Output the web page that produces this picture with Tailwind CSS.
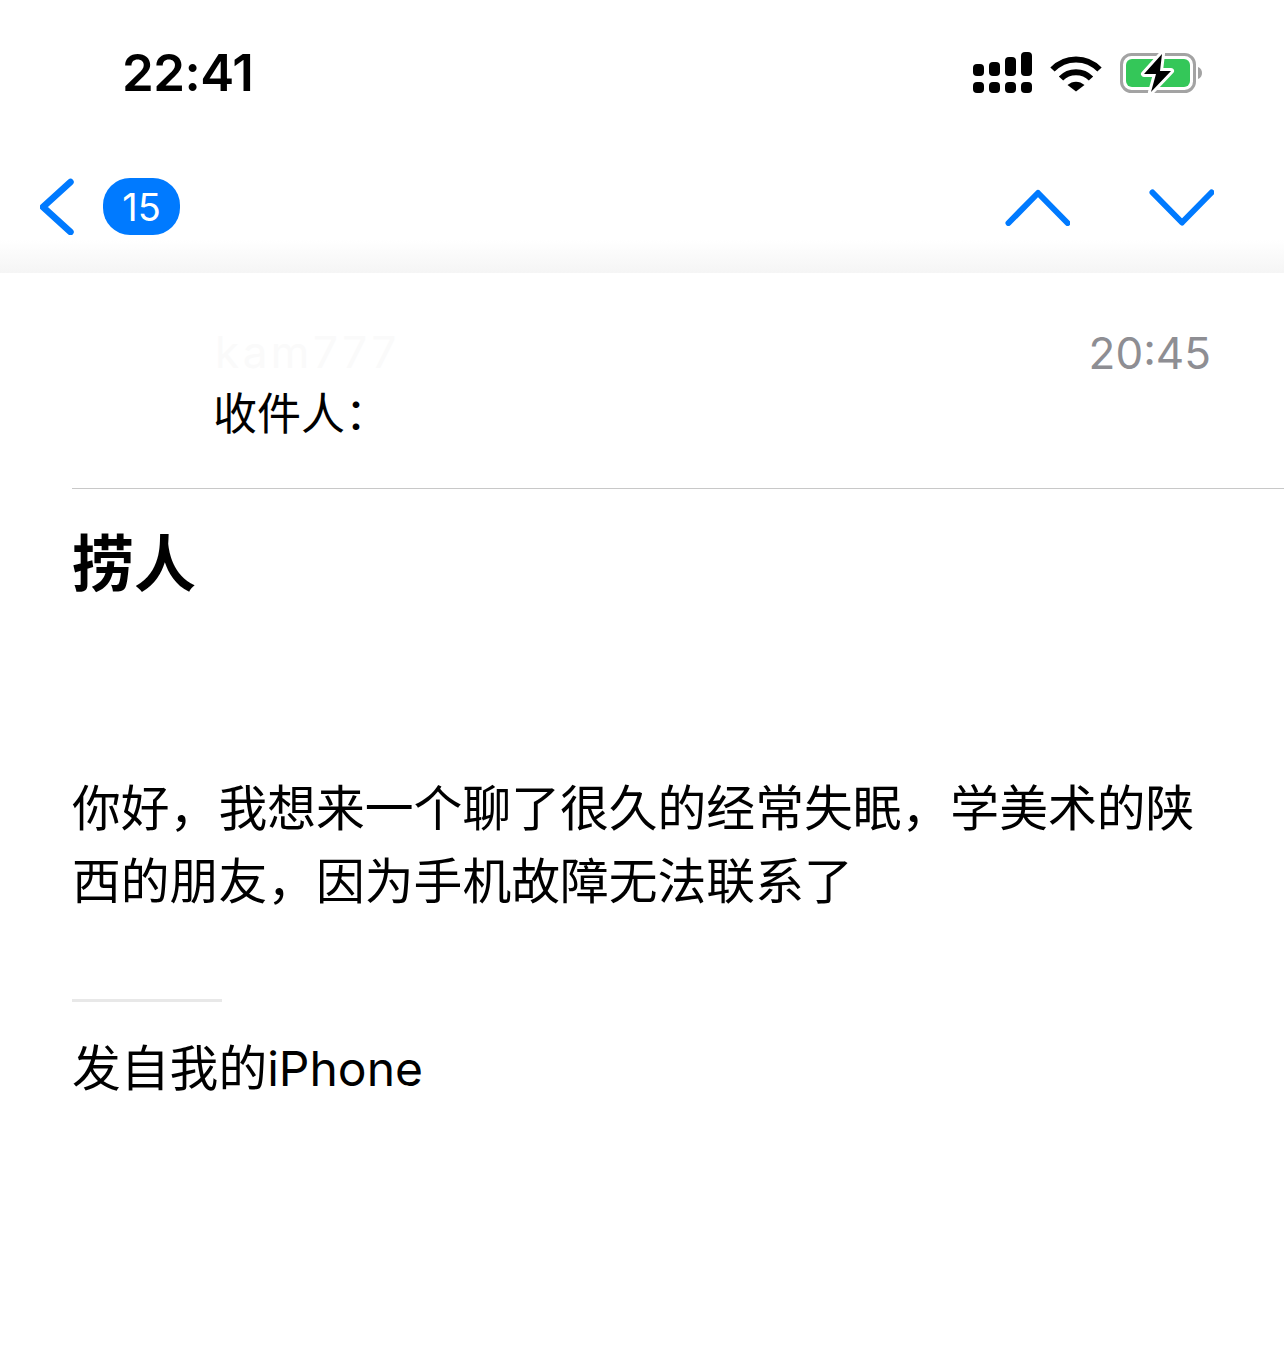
<!DOCTYPE html>
<html lang="zh-CN">
<head>
    <meta charset="UTF-8">
    <meta name="viewport" content="width=device-width, initial-scale=1.0">
    <title>捞人</title>
    <script src="https://cdn.jsdelivr.net/npm/@tailwindcss/browser@4"></script>
</head>
<body class="bg-white text-black min-h-screen font-['Inter','Noto_Sans_CJK_SC',sans-serif]">

    <!-- status bar -->
    <div class="h-[140px] flex items-start justify-between pl-[122px] pr-[81px]">
        <div class="mt-[43px] text-[51px] leading-[60px] font-semibold tracking-[-0.5px]">22:41</div>
        <div class="mt-[52px] flex items-start">
            <svg class="w-[59px] h-[41px] mr-[18px]" viewBox="0 0 59 41" fill="#000">
                <rect x="0" y="12" width="11" height="12" rx="4"/>
                <rect x="16" y="10" width="11" height="14" rx="4"/>
                <rect x="32" y="5" width="11" height="19" rx="4"/>
                <rect x="48" y="0" width="11" height="24" rx="4"/>
                <rect x="0" y="30" width="11" height="11" rx="4"/>
                <rect x="16" y="30" width="11" height="11" rx="4"/>
                <rect x="32" y="30" width="11" height="11" rx="4"/>
                <rect x="48" y="30" width="11" height="11" rx="4"/>
            </svg>
            <svg class="w-[52px] h-[38px] mt-[2px] mr-[18px]" viewBox="0 0 52 38" fill="none" stroke="#000" stroke-width="6">
                <path d="M2.500 15.500C15.500 2 36.500 2 49.500 15.500"/>
                <path d="M11 24.500C19 16 33 16 41 24.500"/>
                <path d="M17.500 31L26 37.500L34.500 31C29.500 26.500 22.500 26.500 17.500 31Z" fill="#000" stroke="none"/>
            </svg>
            <svg class="w-[83px] h-[40px] mt-[1px]" viewBox="0 0 83 40">
                <rect x="1.500" y="1.500" width="73" height="37" rx="10" fill="none" stroke="#a3a3a3" stroke-width="3"/>
                <rect x="6" y="6" width="64" height="28" rx="6" fill="#34c759"/>
                <path d="M78 14C81 15 82 17.500 82 20C82 22.500 81 25 78 26Z" fill="#a3a3a3"/>
                <path d="M42 1L24 21H36L31 39L51 18H40Z" fill="#000" stroke="#fff" stroke-width="6" stroke-linejoin="round" paint-order="stroke"/>
            </svg>
        </div>
    </div>

    <!-- nav bar -->
    <nav class="h-[133px] flex items-start justify-between pl-[40px] pr-[70px] bg-gradient-to-b from-white from-75% to-[#f5f5f5]">
        <div class="flex items-center mt-[37px]">
            <svg class="w-[34px] h-[58px]" viewBox="0 0 34 58" fill="none" stroke="#007aff" stroke-width="6.500" stroke-linecap="round" stroke-linejoin="round">
                <path d="M30.500 5L3 30L30.500 55"/>
            </svg>
            <div class="ml-[29px] w-[77px] h-[57px] rounded-[27px] bg-[#007aff] text-white text-[38px] pt-[2px] flex items-center justify-center">15</div>
        </div>
        <div class="flex items-center mt-[49px] gap-[79px]">
            <svg class="w-[65px] h-[37px]" viewBox="0 0 65 37" fill="none" stroke="#007aff" stroke-width="6" stroke-linecap="round" stroke-linejoin="round">
                <path d="M3.500 34L33 4L62.500 34"/>
            </svg>
            <svg class="w-[65px] h-[37px]" viewBox="0 0 65 37" fill="none" stroke="#007aff" stroke-width="6" stroke-linecap="round" stroke-linejoin="round">
                <path d="M3.500 3.500L33 33.500L62.500 3.500"/>
            </svg>
        </div>
    </nav>

    <main class="pl-[72px]">
        <!-- sender / recipient -->
        <section class="h-[216px] border-b border-[#c8c8c8] flex justify-between pr-[73px]">
            <div class="pl-[141px] pt-[49px]">
                <div class="pl-[2px] text-[44px] leading-[60px] tracking-[3.500px] text-[#fafafa]">kam777</div>
                <div class="text-[44px] leading-[60px] mt-[2px]">收件人：</div>
            </div>
            <div class="pt-[50px] text-[44px] leading-[60px] text-[#8e8e93]">20:45</div>
        </section>

        <h1 class="mt-[36px] text-[62px] leading-[80px] font-bold">捞人</h1>

        <p class="mt-[167px] w-[1140px] text-[48.800px] leading-[73px]">你好，我想来一个聊了很久的经常失眠，学美术的陕西的朋友，因为手机故障无法联系了</p>

        <div class="mt-[81px] w-[150px] h-[3px] bg-[#e8e8e8]"></div>
        <p class="mt-[30px] text-[48.800px] leading-[73px]">发自我的<span class="text-[48px]">iPhone</span></p>
    </main>

</body>
</html>
